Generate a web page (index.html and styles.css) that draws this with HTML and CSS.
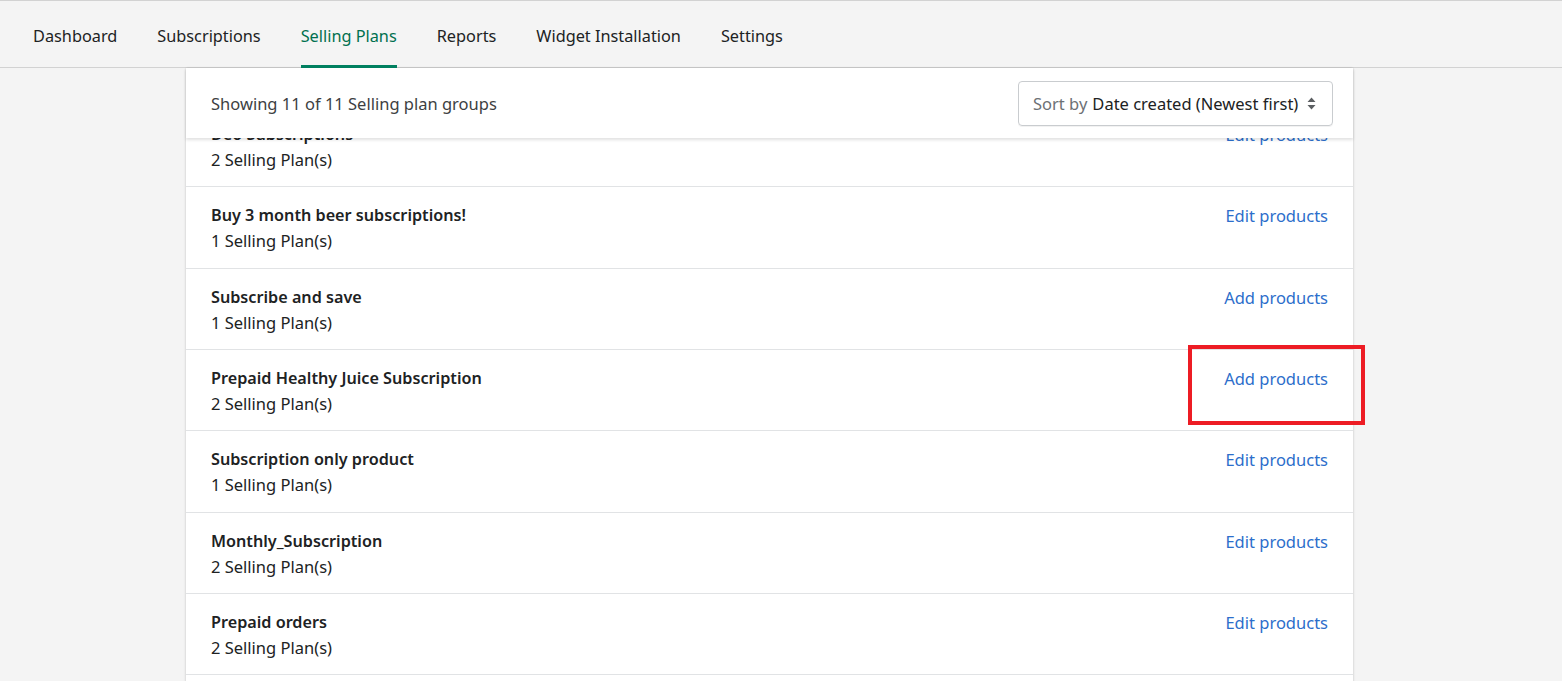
FILE: index.html
```html
<!DOCTYPE html>
<html lang="en">
<head>
<meta charset="utf-8">
<title>Selling Plans</title>
<link rel="stylesheet" href="styles.css">
</head>
<body>
<nav class="tabs">
  <a class="tab">Dashboard</a>
  <a class="tab">Subscriptions</a>
  <a class="tab active">Selling Plans</a>
  <a class="tab">Reports</a>
  <a class="tab">Widget Installation</a>
  <a class="tab">Settings</a>
</nav>
<main class="page">
  <section class="card">
    <header class="card-header">
      <span class="showing">Showing 11 of 11 Selling plan groups</span>
      <div class="sort">
        <span class="sort-label">Sort by</span>
        <span class="sort-value">Date created (Newest first)</span>
        <svg class="sort-icon" width="9" height="13" viewBox="0 0 9 13"><path d="M4.5 0.5 L8.5 5 H0.5 Z M4.5 12.5 L8.5 8 H0.5 Z" fill="#5c5f62"/></svg>
      </div>
    </header>
    <ul class="list">
      <li class="row"><div class="info"><div class="title">Deo Subscriptions</div><div class="sub">2 Selling Plan(s)</div></div><a class="action">Edit products</a></li>
      <li class="row"><div class="info"><div class="title">Buy 3 month beer subscriptions!</div><div class="sub">1 Selling Plan(s)</div></div><a class="action">Edit products</a></li>
      <li class="row"><div class="info"><div class="title">Subscribe and save</div><div class="sub">1 Selling Plan(s)</div></div><a class="action">Add products</a></li>
      <li class="row"><div class="info"><div class="title">Prepaid Healthy Juice Subscription</div><div class="sub">2 Selling Plan(s)</div></div><a class="action highlight">Add products</a></li>
      <li class="row"><div class="info"><div class="title">Subscription only product</div><div class="sub">1 Selling Plan(s)</div></div><a class="action">Edit products</a></li>
      <li class="row"><div class="info"><div class="title">Monthly_Subscription</div><div class="sub">2 Selling Plan(s)</div></div><a class="action">Edit products</a></li>
      <li class="row"><div class="info"><div class="title">Prepaid orders</div><div class="sub">2 Selling Plan(s)</div></div><a class="action">Edit products</a></li>
    </ul>
  </section>
</main>
</body>
</html>
```

FILE: styles.css
```css
* { box-sizing: border-box; }
html, body { margin: 0; padding: 0; }
body {
  background: #f4f4f4;
  font-family: "Noto Sans", "Open Sans", Arial, sans-serif;
  font-size: 16.5px;
  color: #202223;
  height: 681px;
  overflow: hidden;
}
.tabs {
  display: flex;
  height: 68px;
  padding-left: 13px;
  background: #f4f4f4;
  border-top: 1px solid #d2d2d2;
  border-bottom: 1px solid #d2d2d2;
}
.tab {
  display: flex;
  align-items: center;
  padding: 4px 20px 0;
  font-size: 16.3px;
  color: #202223;
  position: relative;
  height: 66px;
}
.tab.active { color: #00704f; }
.tab.active::after {
  content: "";
  position: absolute;
  left: 20px; right: 20px; bottom: -1px;
  height: 3px;
  background: #008060;
}
.page {
  display: flex;
  padding-left: 186px;
}
.card {
  width: 1167px;
  background: #fff;
  box-shadow: 0 0 2px rgba(0,0,0,0.12), 0 1px 3px rgba(0,0,0,0.1);
}
.card-header {
  position: relative;
  z-index: 2;
  display: flex;
  align-items: center;
  justify-content: space-between;
  height: 70px;
  padding: 1px 20px 0 25px;
  background: #fff;
  box-shadow: 0 2px 3px rgba(0,0,0,0.12);
}
.showing { font-size: 16.5px; color: #3d3f42; }
.sort {
  display: flex;
  align-items: center;
  gap: 5px;
  height: 45px;
  width: 315px;
  padding: 0 16px 0 14px;
  border: 1px solid #c9cccf;
  border-radius: 4px;
  font-size: 16.5px;
  box-shadow: 0 1px 0 rgba(0,0,0,0.05);
  margin-top: -1px;
}
.sort-label { color: #6d7175; }
.sort-value { color: #202223; flex: 1; }
.sort-icon { flex: none; }
.list {
  list-style: none;
  margin: -32px 0 0;
  padding: 0 0 60px;
  position: relative;
  z-index: 1;
}
.row {
  display: flex;
  justify-content: space-between;
  align-items: flex-start;
  height: 81.33px;
  padding: 16px 25px 0 25px;
  border-bottom: 1px solid #e1e3e5;
}
.title { font-weight: 600; font-size: 16.2px; line-height: 25px; color: #202223; }
.sub { font-size: 16.5px; line-height: 25px; color: #202223; }
.action {
  color: #2c6ecb;
  font-size: 16.5px;
  line-height: 25px;
  position: relative;
}
.highlight::after {
  content: "";
  position: absolute;
  left: -36px; right: -37px;
  top: -21px; bottom: -34px;
  border: 4px solid #ed1c24;
}
```
